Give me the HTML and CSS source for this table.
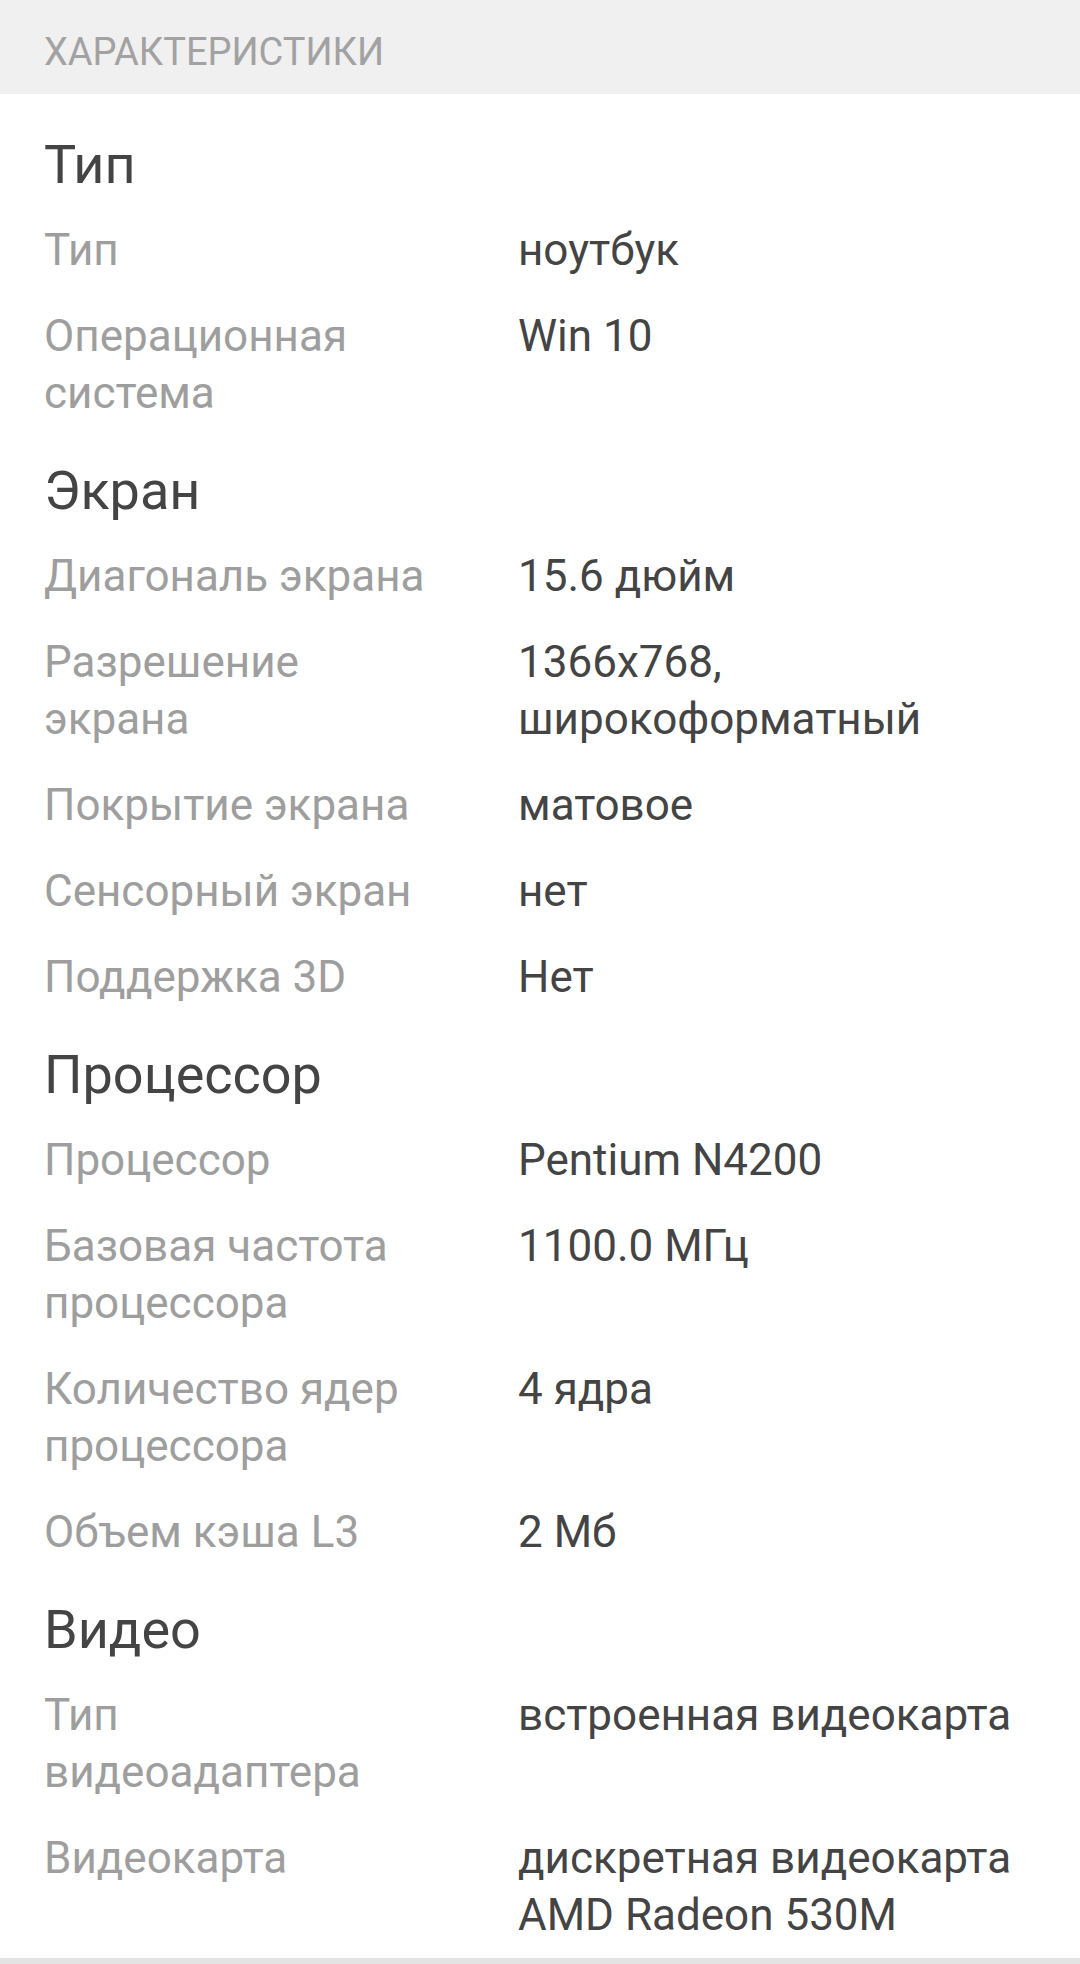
FILE: index.html
```html
<!DOCTYPE html>
<html lang="ru">
<head>
<meta charset="utf-8">
<title>Характеристики</title>
<link rel="stylesheet" href="styles.css">
</head>
<body>
<div class="specs">
  <div class="specs-header">ХАРАКТЕРИСТИКИ</div>
  <div class="specs-body">
    <section class="group">
      <h2 class="group-title">Тип</h2>
      <dl class="rows">
        <div class="row"><dt>Тип</dt><dd>ноутбук</dd></div>
        <div class="row"><dt>Операционная система</dt><dd>Win 10</dd></div>
      </dl>
    </section>
    <section class="group">
      <h2 class="group-title">Экран</h2>
      <dl class="rows">
        <div class="row"><dt>Диагональ экрана</dt><dd>15.6 дюйм</dd></div>
        <div class="row"><dt>Разрешение экрана</dt><dd>1366x768, широкоформатный</dd></div>
        <div class="row"><dt>Покрытие экрана</dt><dd>матовое</dd></div>
        <div class="row"><dt>Сенсорный экран</dt><dd>нет</dd></div>
        <div class="row"><dt>Поддержка 3D</dt><dd>Нет</dd></div>
      </dl>
    </section>
    <section class="group">
      <h2 class="group-title">Процессор</h2>
      <dl class="rows">
        <div class="row"><dt>Процессор</dt><dd>Pentium N4200</dd></div>
        <div class="row"><dt>Базовая частота процессора</dt><dd>1100.0 МГц</dd></div>
        <div class="row"><dt>Количество ядер процессора</dt><dd>4 ядра</dd></div>
        <div class="row"><dt>Объем кэша L3</dt><dd>2 Мб</dd></div>
      </dl>
    </section>
    <section class="group">
      <h2 class="group-title">Видео</h2>
      <dl class="rows">
        <div class="row"><dt>Тип видеоадаптера</dt><dd>встроенная видеокарта</dd></div>
        <div class="row"><dt>Видеокарта</dt><dd>дискретная видеокарта AMD Radeon 530M</dd></div>
      </dl>
    </section>
  </div>
  <div class="specs-footer"></div>
</div>
</body>
</html>
```
FILE: styles.css
```css
html, body {
  margin: 0;
  padding: 0;
  background: #ffffff;
}

body {
  font-family: Roboto, "Noto Sans", "Liberation Sans", sans-serif;
  width: 1080px;
  overflow: hidden;
}

.specs {
  display: flex;
  flex-direction: column;
}

.specs-header {
  background: #f0f0f0;
  height: 94px;
  box-sizing: border-box;
  padding: 11px 44px 0;
  font-size: 38px;
  line-height: 83px;
  color: #a2a2a2;
}

.specs-body {
  display: flex;
  flex-direction: column;
  gap: 37px;
  padding: 39px 44px 14px;
}

.group {
  display: flex;
  flex-direction: column;
}

.group-title {
  margin: 0;
  padding-bottom: 25px;
  font-size: 54px;
  line-height: 64px;
  font-weight: 400;
  color: #444444;
}

.rows {
  display: flex;
  flex-direction: column;
  gap: 29px;
  margin: 0;
}

.row {
  display: grid;
  grid-template-columns: 390px 1fr;
  column-gap: 84px;
  font-size: 44px;
  line-height: 57px;
}

.row dt {
  color: #9e9e9e;
}

.row dd {
  margin: 0;
  color: #444444;
}

.specs-footer {
  height: 20px;
  background: #e3e3e3;
}
```
